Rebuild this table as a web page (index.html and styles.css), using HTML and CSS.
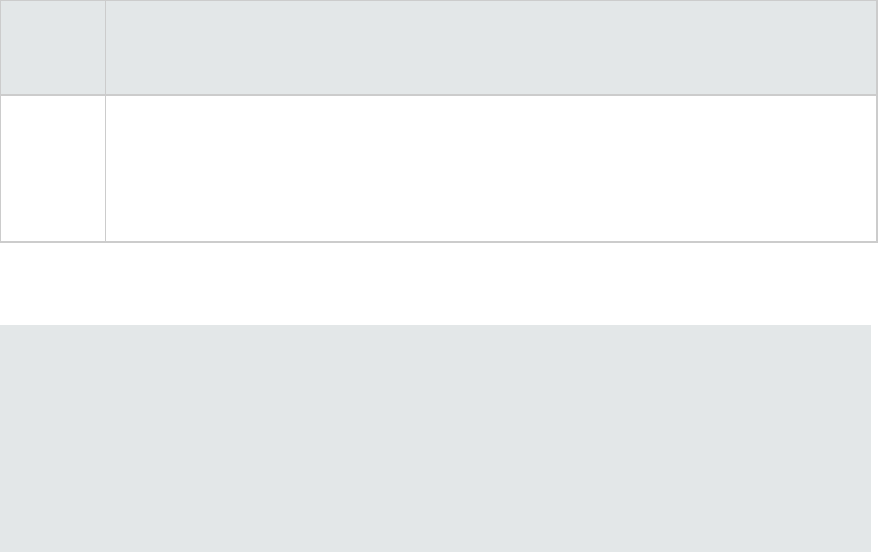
FILE: index.html
```html
<!DOCTYPE html>
<html>
<head>
<meta charset="utf-8">
<link rel="stylesheet" href="styles.css">
</head>
<body>
<table class="grid">
  <thead>
    <tr class="head-row"><th class="col-a"></th><th class="col-b"></th></tr>
  </thead>
  <tbody>
    <tr class="body-row"><td class="col-a"></td><td class="col-b"></td></tr>
  </tbody>
</table>
<div class="panel"></div>
</body>
</html>
```
FILE: styles.css
```css
html, body {
  margin: 0;
  padding: 0;
  background: #ffffff;
  font-family: "Liberation Sans", Arial, sans-serif;
}
.grid {
  border-collapse: collapse;
  width: 878px;
  table-layout: fixed;
  border-right: 2px solid #cccccc;
}
.grid th, .grid td {
  border: 1px solid #cccccc;
  padding: 0;
}
.col-a { width: 104px; }
.head-row th {
  height: 93px;
  background: #e3e7e8;
  border-bottom-width: 2px;
}
.body-row td {
  height: 145px;
  background: #ffffff;
  border-bottom-width: 2px;
}
.panel {
  margin-top: 82px;
  width: 871px;
  height: 240px;
  background: #e3e7e8;
}
```
